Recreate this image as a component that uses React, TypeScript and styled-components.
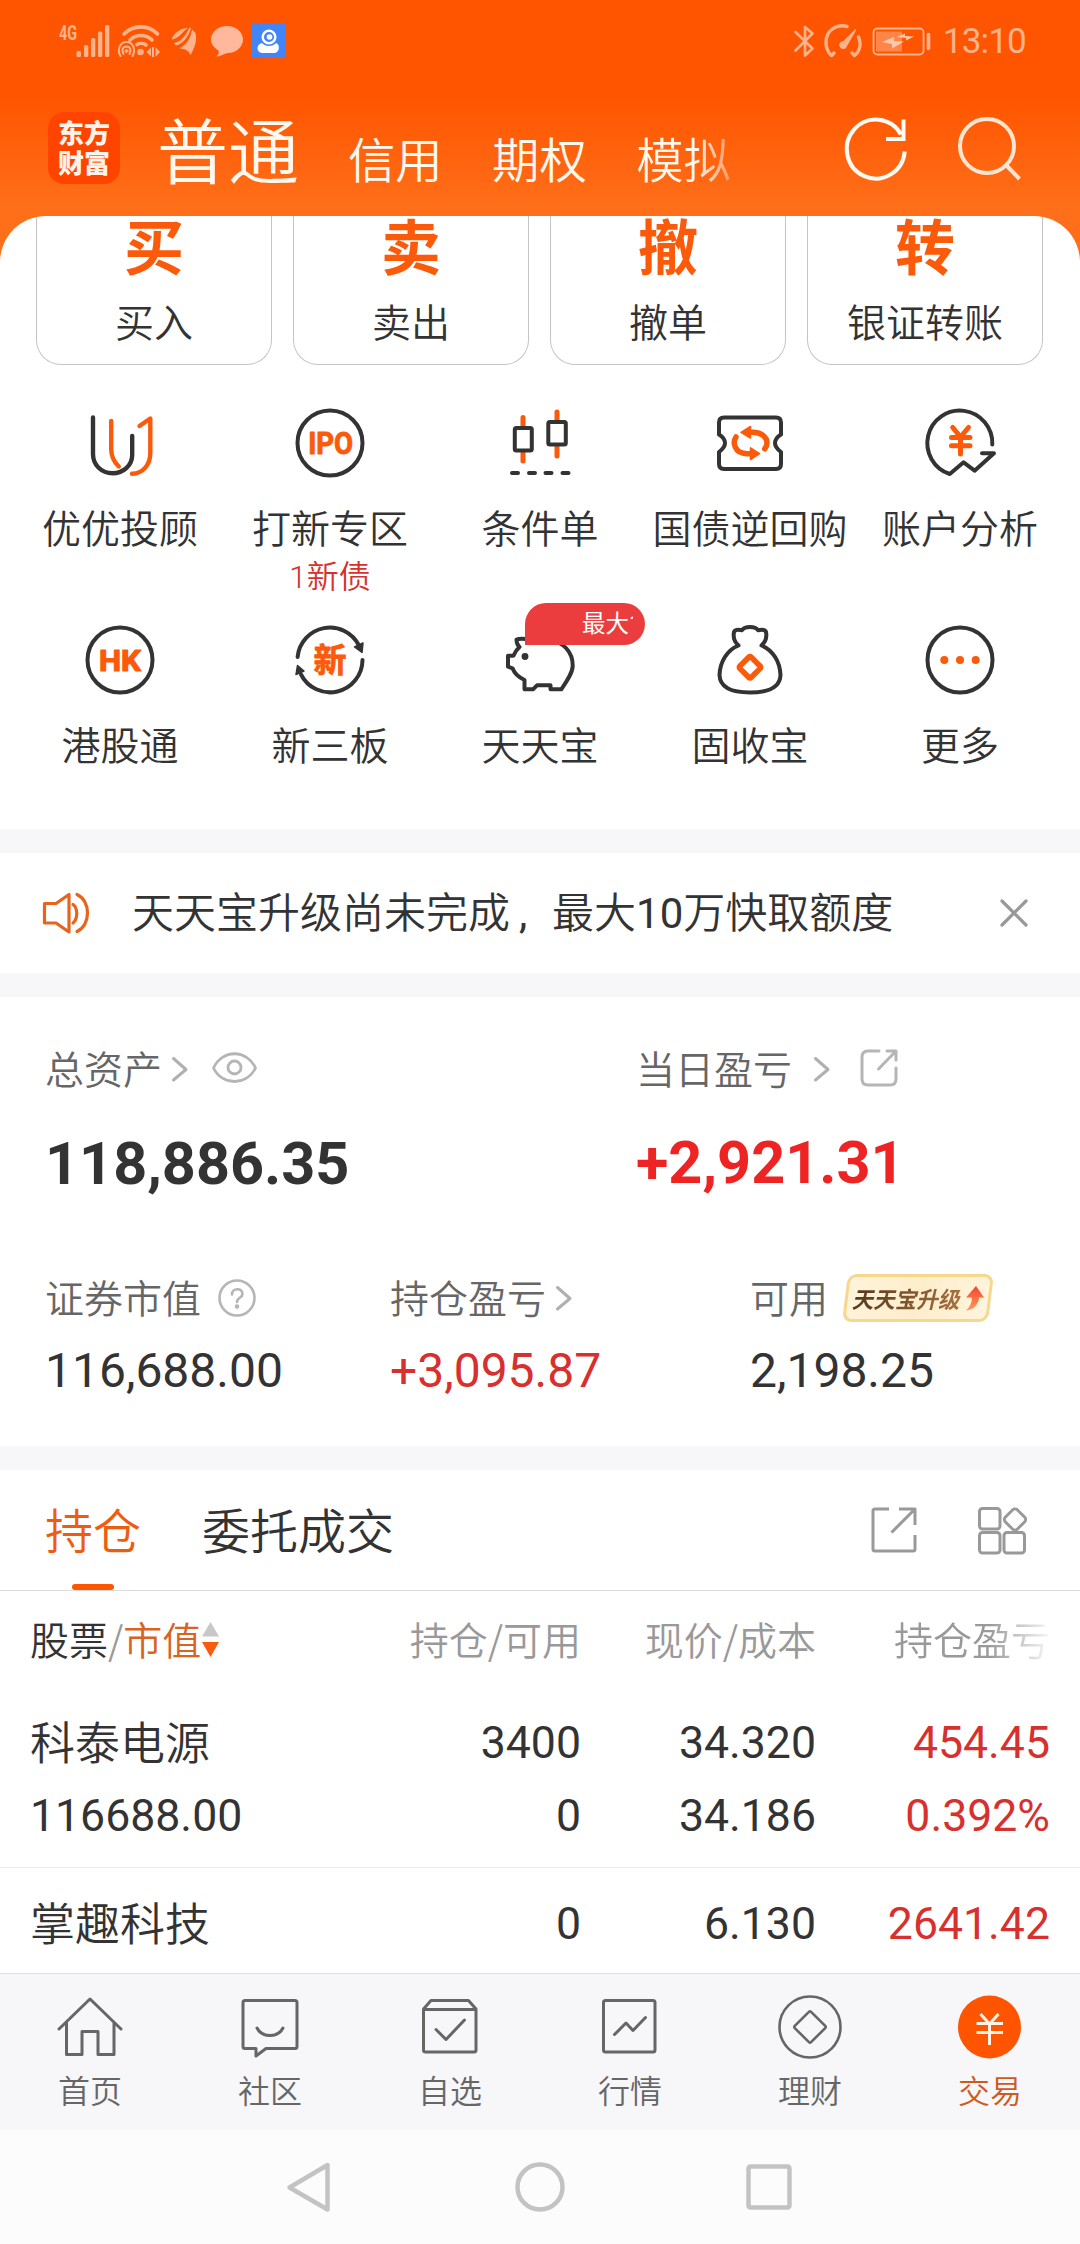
import React from "react";
import styled, { createGlobalStyle } from "styled-components";

const INK = "#333333";
const ORANGE = "#fa5a0a";
const RED = "#d8302e";
const CJK = `"Noto Sans CJK SC", sans-serif`;
const MIXED = `Roboto, "Noto Sans CJK SC", sans-serif`;
const LIGHT = 350;

const GlobalStyle = createGlobalStyle`
  * { box-sizing: border-box; }
  body { margin: 0; background: #fff; }
  svg { display: block; flex: none; overflow: visible; }
`;

const Page = styled.div`
  width: 1080px;
  height: 2244px;
  overflow: hidden;
  display: flex;
  flex-direction: column;
  font-family: ${MIXED};
  color: ${INK};
  background: linear-gradient(#ff5500 0, #ff5500 95px, #ff6e19 205px, #ff6e19 300px);
`;

/* ---------- status bar ---------- */
const StatusBar = styled.div`
  height: 82px;
  padding: 0 54px 0 59px;
  display: flex;
  align-items: center;
  justify-content: space-between;
  color: #ffb38c;
`;
const StatusGroup = styled.div<{ $gap: number }>`
  display: flex;
  align-items: center;
  gap: ${(p) => p.$gap}px;
`;
const Clock = styled.span`
  font-size: 35px;
  line-height: 40px;
  margin: 1px 0 0 1px;
  letter-spacing: -0.8px;
`;

/* ---------- header ---------- */
const Header = styled.header`
  height: 134px;
  flex: none;
  display: flex;
  align-items: flex-start;
  padding: 30px 60px 0 48px;
  color: #fff8ef;
  font-family: ${CJK};
`;
const Logo = styled.div`
  width: 72px;
  height: 72px;
  flex: none;
  border-radius: 16px;
  background: #ff4400;
  color: #fff4ea;
  font-weight: 900;
  font-size: 26px;
  line-height: 30px;
  padding-top: 5px;
  text-align: center;
`;
const Modes = styled.nav`
  display: flex;
  align-items: baseline;
  margin: -5px 0 0 37px;
  white-space: nowrap;
`;
const ModeActive = styled.span`
  font-size: 71px;
  line-height: 80px;
  margin-right: 49px;
  font-weight: ${LIGHT};
`;
const Mode = styled.span<{ $faded?: boolean }>`
  font-size: 47.3px;
  line-height: 60px;
  margin-right: 49.5px;
  font-weight: ${LIGHT};
  ${(p) =>
    p.$faded &&
    `margin-right: 0; background: linear-gradient(90deg, #fff8ef 62%, rgba(255,248,239,0.35) 100%);
     -webkit-background-clip: text; background-clip: text; color: transparent;`}
`;
const HeaderIcons = styled.div`
  margin-left: auto;
  padding-top: 5px;
  display: flex;
  gap: 51px;
`;

/* ---------- panel ---------- */
const Panel = styled.main`
  background: #fff;
  border-radius: 46px 46px 0 0;
  overflow: hidden;
  height: 1757px;
  flex: none;
`;
const Cards = styled.div`
  display: grid;
  grid-template-columns: repeat(4, 236px);
  gap: 21px;
  padding: 0 36px;
`;
const Card = styled.div`
  height: 149px;
  border: 1px solid #c4c4c4;
  border-top: none;
  border-radius: 0 0 25px 25px;
  display: flex;
  flex-direction: column;
  align-items: center;
  font-family: ${CJK};
`;
const CardGlyph = styled.span`
  color: ${ORANGE};
  font-weight: 700;
  font-size: 60px;
  line-height: 56px;
  height: 58px;
`;
const CardLabel = styled.span`
  margin-top: 24px;
  font-size: 39px;
  line-height: 44px;
  font-weight: ${LIGHT};
`;

const Shortcuts = styled.div`
  display: grid;
  grid-template-columns: repeat(5, 210px);
  grid-auto-rows: 217px;
  padding: 42px 15px 0;
  height: 464px;
`;
const Shortcut = styled.div`
  position: relative;
  display: flex;
  flex-direction: column;
  align-items: center;
  white-space: nowrap;
`;
const ShortcutLabel = styled.span`
  margin-top: 24px;
  font-family: ${CJK};
  font-weight: ${LIGHT};
  font-size: 39px;
  line-height: 46px;
`;
const ShortcutNote = styled.span`
  margin-top: 10px;
  font-size: 32px;
  line-height: 36px;
  font-weight: ${LIGHT};
  color: ${RED};
`;
const Bubble = styled.span`
  position: absolute;
  left: 90px;
  top: -21px;
  width: 120px;
  height: 42px;
  padding-left: 57px;
  border-radius: 21px 21px 21px 0;
  background: #ec3d3e;
`;
const BubbleText = styled.span`
  display: block;
  width: 51px;
  overflow: hidden;
  color: #fff;
  font-size: 23.5px;
  line-height: 42px;
`;

const Band = styled.div`
  height: 24px;
  background: #f7f7fa;
`;

const Notice = styled.div`
  height: 120px;
  display: flex;
  align-items: center;
  padding: 0 52px 0 42px;
`;
const NoticeText = styled.span`
  flex: 1;
  margin: 2px 0 0 42px;
  font-size: 42px;
  line-height: 50px;
  font-weight: ${LIGHT};
  white-space: nowrap;
`;
const Comma = styled.span`
  display: inline-block;
  width: 42px;
  padding-left: 9px;
  font-weight: 400;
`;
const Digits = styled.span`
  font-weight: 400;
`;

/* ---------- assets ---------- */
const Assets = styled.section`
  height: 449px;
  padding: 48px 0 0 45px;
`;
const AssetRow = styled.div<{ $cols: string }>`
  display: grid;
  grid-template-columns: ${(p) => p.$cols};
  & + & { margin-top: 80px; }
`;
const AssetLabel = styled.div`
  display: flex;
  align-items: center;
  height: 48px;
  font-family: ${CJK};
  font-weight: ${LIGHT};
  font-size: 39px;
  line-height: 48px;
  color: #666;
`;
const LabelText = styled.span`
  height: 52px;
`;
const Gap = styled.i<{ $w: number }>`
  width: ${(p) => p.$w}px;
  flex: none;
`;
const BigValue = styled.div<{ $up?: boolean }>`
  margin-top: ${(p) => (p.$up ? 40 : 41)}px;
  font-size: 59.4px;
  line-height: 60px;
  font-weight: 700;
  color: ${(p) => (p.$up ? "#ee2424" : INK)};
`;
const Value = styled.div<{ $up?: boolean }>`
  margin-top: 25px;
  font-size: 48px;
  line-height: 48px;
  color: ${(p) => (p.$up ? RED : INK)};
`;
const Upgrade = styled.div`
  width: 146px;
  height: 48px;
  margin-left: 17px;
  border: 3px solid #f6d78c;
  border-radius: 9px;
  background: linear-gradient(100deg, #fff3da, #fdeecb 50%, #fff4dd);
  transform: skewX(-7deg);
  display: flex;
  align-items: center;
  padding-left: 6px;
  gap: 4px;
`;
const UpgradeText = styled.span`
  font-weight: 700;
  font-size: 21.5px;
  line-height: 40px;
  white-space: nowrap;
  transform: skewX(-6deg) scaleY(1.06);
  background: linear-gradient(90deg, #57381f, #a8703f);
  -webkit-background-clip: text;
  background-clip: text;
  color: transparent;
`;

/* ---------- holdings ---------- */
const Tabs = styled.div`
  height: 121px;
  border-bottom: 1px solid #dcdcdc;
  display: flex;
  align-items: center;
  padding: 0 53px 0 45px;
  font-family: ${CJK};
`;
const Tab = styled.div<{ $active?: boolean }>`
  height: 120px;
  margin-right: 61px;
  font-weight: ${LIGHT};
  font-size: 48px;
  line-height: 116px;
  color: ${(p) => (p.$active ? "#ee5c10" : INK)};
  position: relative;
`;
const TabMark = styled.span`
  position: absolute;
  left: 27px;
  bottom: 0;
  width: 42px;
  height: 6px;
  border-radius: 3px;
  background: #ff5500;
`;
const TabIcons = styled.div`
  margin-left: auto;
  display: flex;
  gap: 61px;
`;
const GRID = "267px 284px 235px 234px";
const TableHead = styled.div`
  display: grid;
  grid-template-columns: ${GRID};
  height: 96px;
  padding: 0 0 0 30px;
  font-family: ${CJK};
  font-weight: ${LIGHT};
  font-size: 39px;
  line-height: 96px;
  color: #999;
`;
const HeadCell = styled.div<{ $left?: boolean; $faded?: boolean }>`
  display: flex;
  height: 94px;
  align-items: center;
  white-space: nowrap;
  justify-content: ${(p) => (p.$left ? "flex-start" : "flex-end")};
  ${(p) =>
    p.$faded &&
    `mask-image: linear-gradient(90deg, #000 74%, transparent 102%);
     -webkit-mask-image: linear-gradient(90deg, #000 74%, transparent 102%);`}
`;
const Tint = styled.span<{ $c: string }>`
  color: ${(p) => p.$c};
`;
const Holding = styled.div`
  display: grid;
  grid-template-columns: ${GRID};
  grid-auto-rows: 60px;
  row-gap: 13px;
  height: 181px;
  padding: 25px 0 0 30px;
  border-bottom: 1px solid #ebebeb;
  font-size: 44.6px;
  line-height: 62px;
`;
const Name = styled.span`
  font-family: ${CJK};
  font-weight: ${LIGHT};
  font-size: 45px;
  line-height: 58px;
`;
const Num = styled.span<{ $left?: boolean; $up?: boolean }>`
  text-align: ${(p) => (p.$left ? "left" : "right")};
  color: ${(p) => (p.$up ? RED : INK)};
`;

/* ---------- bottom ---------- */
const TabBar = styled.footer`
  height: 157px;
  flex: none;
  background: #f7f7fa;
  border-top: 1px solid #e0e0e2;
  display: grid;
  grid-template-columns: repeat(6, 180px);
  padding-top: 21px;
`;
const BarItem = styled.div<{ $active?: boolean }>`
  display: flex;
  flex-direction: column;
  align-items: center;
  gap: 10px;
  font-family: ${CJK};
  font-weight: ${LIGHT};
  font-size: 32px;
  line-height: 40px;
  color: ${(p) => (p.$active ? "#cf5a1c" : "#666")};
`;
const SystemNav = styled.div`
  height: 114px;
  flex: none;
  background: #fcfcfc;
  display: flex;
  align-items: center;
  padding: 0 0 0 286px;
`;

/* ---------- icons ---------- */
const Svg = ({ w, h, sw = 4, c = INK, children }: any) => (
  <svg width={w} height={h} viewBox={`0 0 ${w} ${h}`} fill="none" stroke={c} strokeWidth={sw} strokeLinecap="round" strokeLinejoin="round">
    {children}
  </svg>
);
const Word = ({ x, y, size, len, children, sw = 1.4 }: any) => (
  <text x={x} y={y} fontSize={size} fontWeight={700} fontFamily={MIXED} fill={ORANGE} stroke={ORANGE} strokeWidth={sw} textAnchor="middle" textLength={len} lengthAdjust="spacingAndGlyphs">
    {children}
  </text>
);
const Chevron = () => (
  <Svg w={16} h={24} sw={3} c="#b0b0b0"><path d="M1.5 1.5L14 12.5L1.5 23" /></Svg>
);

const AdvisorIcon = () => (
  <Svg w={72} h={72} sw={4.4}>
    <path d="M9 10.5V47C9 58 17.500 66.300 28.600 66.300S48.200 58 48.200 48V29" />
    <path stroke={ORANGE} d="M27.200 14V42C27.200 50 30 55 34.800 59.500M55.500 19L66.300 11.500V46C66.300 58 58.500 66.700 48 66.700" />
  </Svg>
);
const IpoIcon = () => (
  <Svg w={72} h={72}><circle cx="36" cy="36" r="32.500" /><Word x={36.7} y={47} size={31} len={45} sw={0.9}>IPO</Word></Svg>
);
const CandleIcon = () => (
  <Svg w={72} h={72}>
    <path stroke={ORANGE} strokeWidth="5" d="M19 10.500V19M19 45V54M53 5V13M53 40V49" />
    <rect x="10.800" y="21" width="17" height="22.500" rx="1.500" />
    <rect x="44.300" y="15" width="17.500" height="22.500" rx="1.500" />
    <path d="M8 66H14M25 66H31M41.500 66H47.500M58.500 66H64.500" />
  </Svg>
);
const RepoIcon = () => (
  <Svg w={72} h={72}>
    <path d="M10 10.500H62Q67 10.500 67 15.500V27.500C63 30 61 32 61 36S63 42 67 45V57Q67 62 62 62H10Q5 62 5 57V45C9 42 11 40 11 36S9 30 5 27.500V15.500Q5 10.500 10 10.500Z" />
    <path stroke={ORANGE} strokeWidth="5.500" d="M36 25.300H39C47 25.300 53 30 53 36C53 38.500 52 40 50.700 41.800M22 30C18.500 35 20 46.700 33 46.700H37" />
    <path fill={ORANGE} stroke={ORANGE} strokeWidth="1.500" d="M27 25.300L36.500 19.500V31ZM45.500 46.700L36.500 40.800V52.500Z" />
  </Svg>
);
const AnalysisIcon = () => (
  <Svg w={72} h={72}>
    <path d="M68.300 37.500A32.500 32.500 0 1 0 25.800 67L39.600 55.300L50.600 63.700L70 46.300H58" />
    <path stroke={ORANGE} strokeWidth="5" d="M28.700 20.500L36.500 30L44.500 20.500M36.500 30V47M27.500 30.500H46M27.500 38.700H46" />
  </Svg>
);
const HkIcon = () => (
  <Svg w={72} h={72}><circle cx="36" cy="36" r="32.500" /><Word x={36} y={46.5} size={30} len={42} sw={1.2}>HK</Word></Svg>
);
const NewBoardIcon = () => (
  <Svg w={72} h={72}>
    <path d="M3.600 33A32.500 32.500 0 0 1 65 21.500M68.500 36A32.500 32.500 0 0 1 7 50.500" />
    <path fill={INK} strokeWidth="1.500" d="M68 28.500L60.500 23L69 19ZM3.500 41.500L2 50.500L10 47Z" />
    <Word x={36} y={48} size={33} sw={0.8}>新</Word>
  </Svg>
);
const PigIcon = () => (
  <Svg w={72} h={72}>
    <path d="M22 15C18 14.500 15 14.500 12.500 15.500C12.500 19 13.300 21 15.500 23C12 26 11 28.500 9.500 31.700H4V42.700L8.500 44.300C10.500 49.500 15 53.500 20.500 56V65.300H29L33 61.300H46.500V65.300H57.300C63 57 68.500 49 68.700 42C69 29 60 17 44 16H30C27 14.500 25 15 22 15Z" />
    <circle cx="21" cy="32.500" r="2.200" fill={INK} strokeWidth="2.500" />
  </Svg>
);
const BagIcon = () => (
  <Svg w={72} h={72}>
    <path d="M24.500 21.500C20 17.500 19 13 20 8C21 5 24.500 5.500 28 6.200C31 2 41 2 44 6.200C47.500 5.500 51 5 52 8C53 13 52 17.500 47.500 21.500C59 26 66 38 66.500 51C66 64 53 68.500 36 68.500S6 64 5.500 51C6 38 13 26 24.500 21.500Z" />
    <rect x="-8" y="-8" width="16" height="16" rx="1.500" transform="translate(36 43.300) rotate(45)" stroke={ORANGE} strokeWidth="5.500" />
  </Svg>
);
const MoreIcon = () => (
  <Svg w={72} h={72}>
    <circle cx="36" cy="36" r="32.500" />
    {[20.3, 36, 51.7].map((x) => <circle key={x} cx={x} cy="36" r="4" fill={ORANGE} stroke="none" />)}
  </Svg>
);

const shortcuts = [
  { label: "优优投顾", icon: <AdvisorIcon /> },
  { label: "打新专区", icon: <IpoIcon />, note: "1新债" },
  { label: "条件单", icon: <CandleIcon /> },
  { label: "国债逆回购", icon: <RepoIcon /> },
  { label: "账户分析", icon: <AnalysisIcon /> },
  { label: "港股通", icon: <HkIcon /> },
  { label: "新三板", icon: <NewBoardIcon /> },
  { label: "天天宝", icon: <PigIcon />, bubble: "最大1" },
  { label: "固收宝", icon: <BagIcon /> },
  { label: "更多", icon: <MoreIcon /> },
];

const GREY = "#666";
const barItems = [
  {
    label: "首页",
    icon: (
      <Svg w={66} h={64} sw={3} c={GREY}>
        <path d="M2 34L33 4L64 34M9.500 28V59.500H25V36.500H41V59.500H57V28" />
      </Svg>
    ),
  },
  {
    label: "社区",
    icon: (
      <Svg w={66} h={64} sw={3} c={GREY}>
        <path d="M8 5.500H58Q60 5.500 60 7.500V51.500Q60 53.500 58 53.500H29L19 61V53.500H8Q6 53.500 6 51.500V7.500Q6 5.500 8 5.500ZM20 33C25 43 41 43 46 33" />
      </Svg>
    ),
  },
  {
    label: "自选",
    icon: (
      <Svg w={66} h={64} sw={3} c={GREY}>
        <path d="M6.500 14V55Q6.500 57 8.500 57H57Q59 57 59 55V14L51.500 5.500H14ZM6.500 14.500H59M19 34.500L29 44.500L47.500 25" />
      </Svg>
    ),
  },
  {
    label: "行情",
    icon: (
      <Svg w={66} h={64} sw={3} c={GREY}>
        <rect x="6.500" y="5.500" width="51.500" height="51.500" rx="2" />
        <path d="M17.500 39.500L29 28L36 35.500L48.500 22.500" />
      </Svg>
    ),
  },
  {
    label: "理财",
    icon: (
      <Svg w={66} h={64} sw={2.6} c={GREY}>
        <circle cx="33" cy="32" r="30.500" />
        <rect x="-11.500" y="-11.500" width="23" height="23" rx="1.500" transform="translate(33 32) rotate(45)" />
      </Svg>
    ),
  },
  {
    label: "交易",
    active: true,
    icon: (
      <Svg w={66} h={64} sw={3} c="#fff3e6">
        <circle cx="32.500" cy="32" r="31.500" fill="#ff5500" stroke="none" />
        <path strokeLinecap="butt" d="M23.500 19L32.500 29L41.500 19M32.500 29V50M19.500 28.500H46M19.500 37.500H46" />
      </Svg>
    ),
  },
];

const holdings = [
  { name: "科泰电源", value: "116688.00", held: "3400", free: "0", price: "34.320", cost: "34.186", gain: "454.45", rate: "0.392%" },
  { name: "掌趣科技", held: "0", price: "6.130", gain: "2641.42" },
];

export default function App() {
  return (
    <Page>
      <GlobalStyle />
      <StatusBar>
        <StatusGroup $gap={0}>
          <svg width="51" height="32" viewBox="0 0 51 32" fill="#ffb38c">
            <text x="0" y="15" fontFamily="Roboto" fontWeight="700" fontSize="20" textLength="18" lengthAdjust="spacingAndGlyphs">4G</text>
            <rect x="17.500" y="26" width="4.500" height="6" rx="1.500" />
            <rect x="25" y="20" width="4.300" height="12" rx="1.500" />
            <rect x="32" y="13" width="4.300" height="19" rx="1.500" />
            <rect x="39" y="6.500" width="4.300" height="25.500" rx="1.500" />
            <rect x="46" y="0" width="4.300" height="32" rx="1.500" />
          </svg>
          <Gap $w={8} />
          <Svg w={42} h={32} sw={3.6} c="#ffb38c">
            <path d="M6 9C15 -0.500 31 -0.500 39.500 9M12 15C18 9 28 9 34 15M19 19.500C21.500 18 25.500 18 28 20" />
            <path strokeWidth="2" d="M2.500 31C-1 25.500 1.500 17 8.500 17S18 25.500 14.500 31M5.500 29C3 25 5 21.500 8.500 21.500S14 25 11.500 29" />
            <circle cx="8.500" cy="26" r="1.500" fill="#ffb38c" strokeWidth="1" />
            <circle cx="22.500" cy="27" r="3.300" fill="#ffb38c" stroke="none" />
            <path fill="#ffb38c" stroke="none" d="M28.500 27L33 22.500V31.500ZM42 27L37.500 22V32ZM34 22H36V32H34Z" />
          </Svg>
          <Gap $w={12} />
          <svg width="25" height="28" viewBox="0 0 25 28" fill="#ffb38c">
            <path d="M0 11C4 4 10 1 16 1C11 4 8 11 0 12.500ZM2 16C11 14 14 7 17.500 0.500L19 1C17 9 11 17 4 18.500ZM7 21.500C15 18 19 10 20 2.500L23.500 6C25.500 14 22 22 18.500 28C17 23.500 12 21.500 7 21.500Z" />
          </svg>
          <Gap $w={14} />
          <svg width="32" height="31" viewBox="0 0 32 31" fill="#ffb89b">
            <path d="M16 0C25 0 32 6 32 13.500S25 27 17 27C14 27 11 30 5.500 30.500C7.500 28.500 8 27 7.500 24.500C3 22 0 18 0 13.500C0 6 7 0 16 0Z" />
          </svg>
          <Gap $w={8} />
          <svg width="34" height="34" viewBox="0 0 34 34">
            <rect width="34" height="34" fill="#4285f8" />
            <circle cx="18" cy="13" r="6.300" fill="none" stroke="#fff" strokeWidth="2.500" />
            <circle cx="18.500" cy="13" r="2.800" fill="#fff" />
            <path fill="#fff" d="M11 19C14 23 22 23 25 19C29 20 29 28 24 29H11C5 28.500 5 20 11 19Z" />
          </svg>
        </StatusGroup>
        <StatusGroup $gap={10}>
          <Svg w={20} h={32} sw={2.6} c="#ffb38c"><path d="M1.500 7L18.500 23.500L11 30.500V2L18.500 8.500L1.500 25.500" /></Svg>
          <Svg w={38} h={34} sw={3.4} c="#ffb38c">
            <path d="M23 2.500C12 -0.500 2 7 2 18C2 24 4 28.500 7.500 31.500L10 29M34.500 13C37.500 20 36 27 30.500 31.500L28 29" />
            <path fill="#ffb38c" strokeWidth="1.500" d="M31.500 6L22 22.500C21 25.500 16.500 24.500 16 21.500C15.500 19 18 18 20 17.500Z" />
          </Svg>
          <Svg w={60} h={28} sw={1.8} c="#ffb38c">
            <rect x="1.500" y="1.500" width="50" height="26" rx="4" />
            <rect x="4" y="4.500" width="26" height="20" fill="#ff8548" stroke="none" />
            <path fill="#ffc9ab" stroke="none" d="M10 15L22 10V14L32 14.500L20 21.500V17ZM25 10L33 6.500V9L42 9.500L34 13.500V11Z" />
            <path strokeWidth="3.600" d="M56.500 7.500V21.500" />
          </Svg>
          <Clock>13:10</Clock>
        </StatusGroup>
      </StatusBar>

      <Header>
        <Logo>东方<br />财富</Logo>
        <Modes>
          <ModeActive>普通</ModeActive>
          <Mode>信用</Mode>
          <Mode>期权</Mode>
          <Mode $faded>模拟</Mode>
        </Modes>
        <HeaderIcons>
          <Svg w={62} h={64} sw={4} c="#fffaf3">
            <path strokeLinecap="butt" strokeLinejoin="miter" d="M59.700 34.500A29 29.500 0 1 1 56 17.500M58.500 2.500V22H41" />
          </Svg>
          <Svg w={62} h={64} sw={4} c="#ffe6d3">
            <circle cx="29" cy="29" r="27" />
            <path strokeLinecap="butt" d="M48 48L61.500 62" />
          </Svg>
        </HeaderIcons>
      </Header>

      <Panel>
        <Cards>
          {[["买", "买入"], ["卖", "卖出"], ["撤", "撤单"], ["转", "银证转账"]].map(([g, l]) => (
            <Card key={l}><CardGlyph>{g}</CardGlyph><CardLabel>{l}</CardLabel></Card>
          ))}
        </Cards>
        <Shortcuts>
          {shortcuts.map((s) => (
            <Shortcut key={s.label}>
              {s.icon}
              <ShortcutLabel>{s.label}</ShortcutLabel>
              {s.note && <ShortcutNote>{s.note}</ShortcutNote>}
              {s.bubble && <Bubble><BubbleText>{s.bubble}</BubbleText></Bubble>}
            </Shortcut>
          ))}
        </Shortcuts>
        <Band />
        <Notice>
          <Svg w={48} h={42} sw={3.2} c="#e8641c">
            <path d="M2.500 11.500H14L27 2.500V40L14 31H2.500ZM31 12.500C36 16 36 27 31 31M35 2.500C49 9 49 33 35 39.500" />
          </Svg>
          <NoticeText>天天宝升级尚未完成<Comma>,</Comma>最大<Digits>10</Digits>万快取额度</NoticeText>
          <Svg w={28} h={28} sw={3.2} c="#999"><path d="M2 2L26 26M26 2L2 26" /></Svg>
        </Notice>
        <Band />
        <Assets>
          <AssetRow $cols="591px 1fr">
            <div>
              <AssetLabel>
                <LabelText>总资产</LabelText><Gap $w={10} /><Chevron /><Gap $w={24} />
                <Svg w={45} h={34} sw={2.8} c="#b5b5b5">
                  <path d="M1.500 16C10 -3 35 -3 43.500 16C35 34 10 34 1.500 16Z" /><circle cx="22.500" cy="15.500" r="6.500" />
                </Svg>
              </AssetLabel>
              <BigValue>118,886.35</BigValue>
            </div>
            <div>
              <AssetLabel>
                <LabelText>当日盈亏</LabelText><Gap $w={22} /><Chevron /><Gap $w={30} />
                <Svg w={38} h={40} sw={3} c="#b5b5b5">
                  <path d="M19 2H8Q2 2 2 8V30Q2 36 8 36H30Q36 36 36 30V19M27 2H36V11M35 3L18.500 20" />
                </Svg>
              </AssetLabel>
              <BigValue $up>+2,921.31</BigValue>
            </div>
          </AssetRow>
          <AssetRow $cols="345px 360px 1fr">
            <div>
              <AssetLabel>
                <LabelText>证券市值</LabelText><Gap $w={17} />
                <Svg w={38} h={38} sw={2.6} c="#b5b5b5">
                  <circle cx="19" cy="19" r="17.500" />
                  <path d="M14 15.500C14 8.500 24.500 8.500 24.500 15C24.500 19 19 18.500 19 23" /><circle cx="19" cy="27.500" r="1" />
                </Svg>
              </AssetLabel>
              <Value>116,688.00</Value>
            </div>
            <div>
              <AssetLabel><LabelText>持仓盈亏</LabelText><Gap $w={10} /><Chevron /></AssetLabel>
              <Value $up>+3,095.87</Value>
            </div>
            <div>
              <AssetLabel>
                <LabelText>可用</LabelText>
                <Upgrade>
                  <UpgradeText>天天宝升级</UpgradeText>
                  <svg width="18" height="25" viewBox="0 0 18 25">
                    <defs><linearGradient id="lift" x1="0" y1="0" x2="0" y2="1"><stop offset="0" stopColor="#f5442c" /><stop offset="1" stopColor="#ff9a5a" /></linearGradient></defs>
                    <path fill="url(#lift)" d="M8.500 0L18 11.500H13C13.500 18 9 24 1.500 24.500C5 21 6.500 16 6 11.500H0Z" />
                  </svg>
                </Upgrade>
              </AssetLabel>
              <Value>2,198.25</Value>
            </div>
          </AssetRow>
        </Assets>
        <Band />
        <Tabs>
          <Tab $active>持仓<TabMark /></Tab>
          <Tab>委托成交</Tab>
          <TabIcons>
            <Svg w={46} h={46} sw={3} c="#999">
              <path strokeLinecap="butt" d="M18 2H4Q2 2 2 4V42Q2 44 4 44H42Q44 44 44 42V28M28 2H44V18M43.500 2.500L20.500 25.500" />
            </Svg>
            <Svg w={49} h={47} sw={3} c="#999">
              <rect x="1.500" y="1.500" width="20.500" height="20.500" rx="3" />
              <rect x="1.500" y="25.500" width="20.500" height="20.500" rx="3" />
              <rect x="26" y="25.500" width="20.500" height="20.500" rx="3" />
              <rect x="-8.500" y="-8.500" width="17" height="17" rx="3.500" transform="translate(37 12.500) rotate(45)" />
            </Svg>
          </TabIcons>
        </Tabs>
        <TableHead>
          <HeadCell $left>
            <Tint $c={INK}>股票</Tint>/<Tint $c="#d9641f">市值</Tint>
            <Gap $w={1} />
            <svg width="17" height="32" viewBox="0 0 17 32"><path fill="#c8c8c8" d="M8.500 0L17 14.500H0Z" /><path fill="#f85a10" d="M0 20H17L8.500 35Z" /></svg>
          </HeadCell>
          <HeadCell>持仓/可用</HeadCell>
          <HeadCell>现价/成本</HeadCell>
          <HeadCell $faded>持仓盈亏</HeadCell>
        </TableHead>
        {holdings.map((h) => (
          <Holding key={h.name}>
            <Name>{h.name}</Name>
            <Num>{h.held}</Num>
            <Num>{h.price}</Num>
            <Num $up>{h.gain}</Num>
            {h.value && (
              <>
                <Num $left>{h.value}</Num>
                <Num>{h.free}</Num>
                <Num>{h.cost}</Num>
                <Num $up>{h.rate}</Num>
              </>
            )}
          </Holding>
        ))}
      </Panel>

      <TabBar>
        {barItems.map((b) => (
          <BarItem key={b.label} $active={b.active}>{b.icon}{b.label}</BarItem>
        ))}
      </TabBar>
      <SystemNav>
        <Svg w={45} h={50} sw={4.5} c="#c3c3c3"><path d="M41.500 3V47.500L3.500 25.500Z" /></Svg>
        <Gap $w={184} />
        <Svg w={50} h={50} sw={4.5} c="#c3c3c3"><circle cx="25" cy="25" r="22.500" /></Svg>
        <Gap $w={181} />
        <Svg w={46} h={46} sw={4.5} c="#c3c3c3"><rect x="2.500" y="2.500" width="41" height="41" rx="2" /></Svg>
      </SystemNav>
    </Page>
  );
}
